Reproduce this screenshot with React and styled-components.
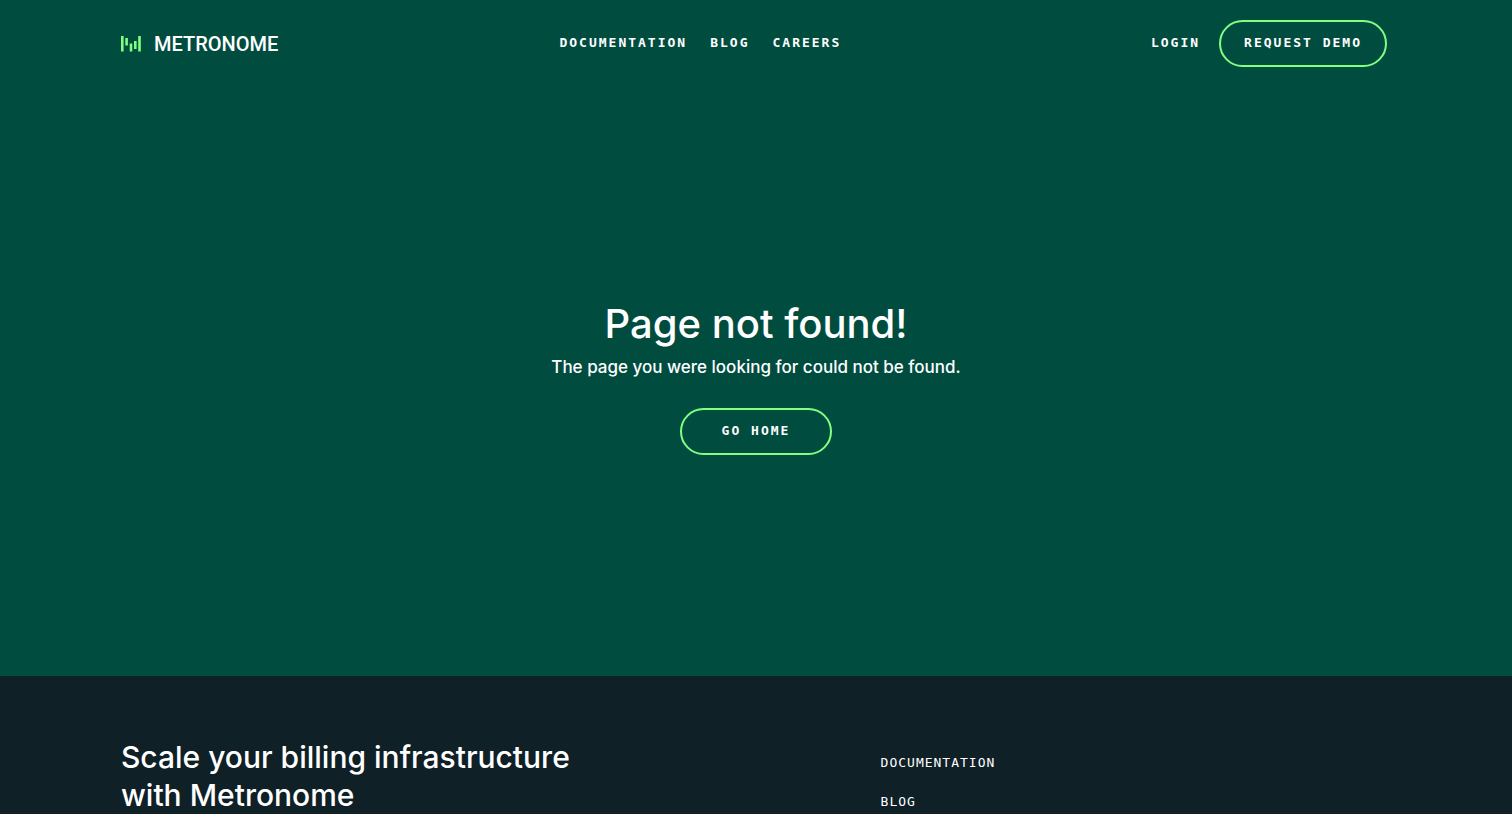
import styled, { createGlobalStyle, css } from "styled-components";

const GlobalStyle = createGlobalStyle`
    *, *::before, *::after {
        box-sizing: border-box;
    }

    body {
        margin: 0;
        background: #0f2027;
        color: #fff;
        font-family: Inter, "Liberation Sans", sans-serif;
    }

    h1, h2, p, ul {
        margin: 0;
        padding: 0;
    }
`;

const monoText = css`
    font-family: "DejaVu Sans Mono", "Liberation Mono", monospace;
    font-size: 13px;
    line-height: 19px;
    text-transform: uppercase;
    text-decoration: none;
    color: #fff;
`;

const Page = styled.div`
    background: #004d40;
`;

const StyledHeader = styled.header`
    display: flex;
    align-items: center;
    padding: 20px 125px 20px 8%;
`;

const Brand = styled.a`
    display: flex;
    align-items: center;
    flex: 0 0 29vw;
    gap: 13px;
    color: #fff;
    text-decoration: none;
    font-family: Roboto, sans-serif;
    font-size: 20px;
    line-height: 24px;
    font-weight: 500;
`;

const NavLinks = styled.nav`
    display: flex;
    align-items: center;
    gap: 23px;
`;

const HeaderActions = styled.div`
    display: flex;
    align-items: center;
    gap: 19px;
    margin-left: auto;
`;

const NavLink = styled.a`
    ${monoText}
    padding-bottom: 2px;
    font-weight: bold;
    letter-spacing: 2px;
`;

const PillButton = styled.button`
    ${monoText}
    font-weight: bold;
    letter-spacing: 2px;
    padding: 11px ${({ $wide }) => ($wide ? "40px" : "23px")} 13px;
    border: 2px solid #80ff80;
    border-radius: 24px;
    background: transparent;
    cursor: pointer;
`;

const Hero = styled.main`
    display: flex;
    flex-direction: column;
    align-items: center;
    padding: 211px 24px 221px;
    text-align: center;
`;

const Title = styled.h1`
    font-size: 40px;
    line-height: 52px;
    font-weight: 500;
`;

const Text = styled.p`
    margin: 4px 0 28px;
    font-size: 17px;
    line-height: 26px;
    font-weight: 500;
`;

const StyledFooter = styled.footer`
    display: grid;
    grid-template-columns: 3fr 2fr;
    padding: 62px 125px 0 8%;
    background: #0f2027;
`;

const FooterTitle = styled.h2`
    font-size: 30px;
    line-height: 38px;
    font-weight: 500;
`;

const FooterLinks = styled.ul`
    display: flex;
    flex-direction: column;
    gap: 20px;
    padding-top: 15px;
    list-style: none;
`;

const FooterItem = styled.li`
    display: flex;
`;

const FooterLink = styled.a`
    ${monoText}
    letter-spacing: 1px;
`;

function LogoMark() {
    return (
        <svg width="20" height="16" viewBox="0 0 20 16" fill="#80ff80" aria-hidden="true">
            <rect x="0" y="0" width="2.6" height="15.5" />
            <rect x="4.3" y="2" width="2.6" height="7.5" />
            <rect x="8.7" y="7.5" width="2.6" height="8" />
            <rect x="13" y="5" width="2.6" height="8" />
            <rect x="17.2" y="0" width="2.6" height="15.5" />
        </svg>
    );
}

export default function App() {
    return (
        <>
            <GlobalStyle />
            <Page>
                <StyledHeader>
                    <Brand href="/">
                        <LogoMark />
                        METRONOME
                    </Brand>
                    <NavLinks>
                        <NavLink href="/docs">Documentation</NavLink>
                        <NavLink href="/blog">Blog</NavLink>
                        <NavLink href="/careers">Careers</NavLink>
                    </NavLinks>
                    <HeaderActions>
                        <NavLink href="/login">Login</NavLink>
                        <PillButton type="button">Request demo</PillButton>
                    </HeaderActions>
                </StyledHeader>
                <Hero>
                    <Title>Page not found!</Title>
                    <Text>The page you were looking for could not be found.</Text>
                    <PillButton type="button" $wide>Go home</PillButton>
                </Hero>
            </Page>
            <StyledFooter>
                <FooterTitle>
                    Scale your billing infrastructure
                    <br />
                    with Metronome
                </FooterTitle>
                <FooterLinks>
                    <FooterItem>
                        <FooterLink href="/docs">Documentation</FooterLink>
                    </FooterItem>
                    <FooterItem>
                        <FooterLink href="/blog">Blog</FooterLink>
                    </FooterItem>
                </FooterLinks>
            </StyledFooter>
        </>
    );
}
